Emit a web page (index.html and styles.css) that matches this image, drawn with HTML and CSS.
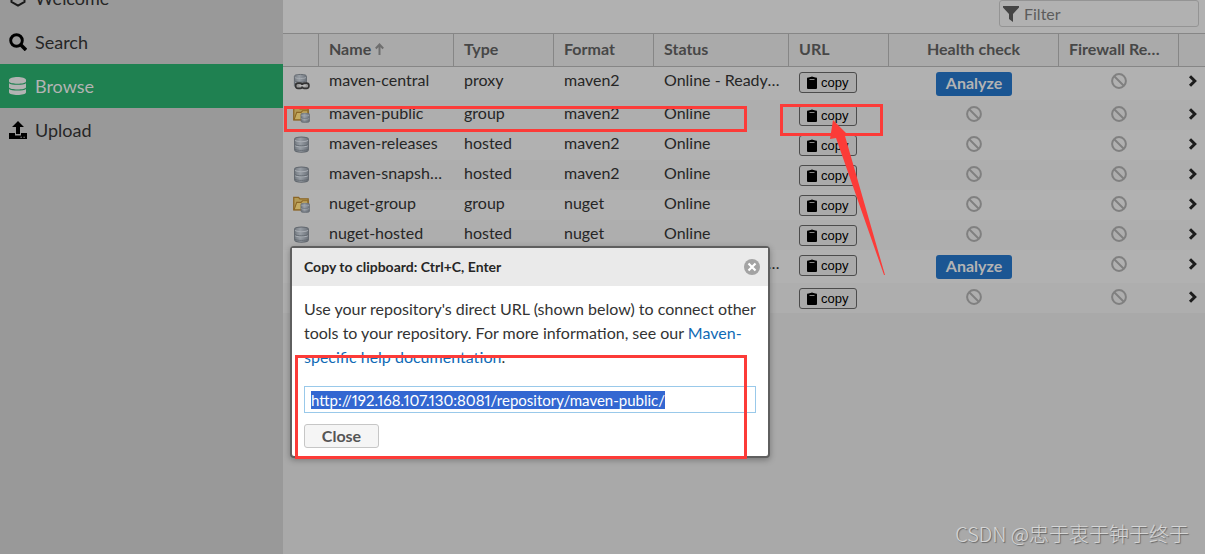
FILE: index.html
```html
<!DOCTYPE html>
<html lang="en">
<head>
<meta charset="utf-8">
<title>Browse repositories</title>
<link rel="stylesheet" href="styles.css">
</head>
<body>
<svg class="defs" aria-hidden="true">
  <defs>
    <linearGradient id="metal" x1="0" x2="1" y1="0" y2="0"><stop offset="0" stop-color="#747a81"/><stop offset=".4" stop-color="#989ea5"/><stop offset="1" stop-color="#6d737b"/></linearGradient>
    <symbol id="i-db" viewBox="0 0 16 16"><path d="M1.500 3.200C1.500 1.800 3 1 8 1s6.500.8 6.500 2.200v9.600c0 1.400-1.500 2.500-6.500 2.500s-6.500-1.100-6.500-2.500z" fill="url(#metal)" stroke="#62686f"/><path d="M2 4.200c1.500 1.500 10.500 1.500 12 0M2 9c1.500 1.500 10.500 1.500 12 0" fill="none" stroke="#a9aeb4" stroke-width="1"/><path d="M2 8.100c1.500 1.500 10.500 1.500 12 0M2 12.500c1.500 1.400 10.500 1.400 12 0" fill="none" stroke="#5f656d" stroke-width=".8"/></symbol>
    <symbol id="i-proxy" viewBox="0 0 16 16"><use href="#i-db" x="0" y="0" width="14" height="15"/><rect x="2.500" y="9.500" width="6.500" height="5" rx="2.200" fill="#999" stroke="#333" stroke-width="1.500"/><rect x="8.500" y="9.500" width="6.500" height="5" rx="2.200" fill="#999" stroke="#333" stroke-width="1.500"/><path d="M6 12h6" stroke="#bbb" stroke-width="1.300"/></symbol>
    <symbol id="i-group" viewBox="0 0 16 16"><path d="M.7 13V1.200h4.500l1.300 1.500h7.800V13z" fill="#b39a55" stroke="#8b6525" stroke-width="1.200"/><path d="M1 13 3.500 6h4l1.500-1.500h5V13z" fill="#c4ab62" stroke="#8b6525"/><use href="#i-db" x="6.500" y="6" width="10" height="10"/></symbol>
    <symbol id="i-ban" viewBox="0 0 16 16"><g fill="none" stroke="#808080" stroke-width="2"><circle cx="8" cy="8" r="6.900"/><path d="m3 3 10 10"/></g></symbol>
    <symbol id="i-clip" viewBox="0 0 10 13"><path d="M1 1.500h1.500V1h1.200C4 .2 6 .2 6.300 1h1.200v.5H9q1 0 1 1V12q0 1-1 1H1q-1 0-1-1V2.500q0-1 1-1z"/><path d="M2.500 3.500h5" stroke="#aaa" stroke-width=".8"/></symbol>
    <symbol id="i-chev" viewBox="0 0 8 10"><path d="m1.500 1 4 4-4 4" fill="none" stroke="#1d1d1d" stroke-width="2.500"/></symbol>
  </defs>
</svg>
<div class="app">
  <nav class="sidebar">
    <ul class="menu">
      <li><a href="#" class="menu-link"><svg viewBox="0 0 18 18"><path d="m9 1.500 6.500 3.700v7.600L9 16.500l-6.500-3.700V5.200z" fill="none" stroke="#1a1a1a" stroke-width="2"/></svg>Welcome</a></li>
      <li><a href="#" class="menu-link"><svg viewBox="0 0 18 18"><circle cx="7.500" cy="7.500" r="5.800" fill="none" stroke="#000" stroke-width="2.900"/><path d="m12 12 5 5" stroke="#000" stroke-width="3.500"/></svg>Search</a></li>
      <li><a href="#" class="menu-link active"><svg viewBox="0 0 18 18" fill="#b3b3b3"><path d="M0 3c0-4 17-4 17 0v1.500c0 3-17 3-17 0zM0 6.300c2 2 15 2 17 0v4c0 3-17 3-17 0zM0 12c2 2 15 2 17 0v3.300c0 3.600-17 3.600-17 0z"/></svg>Browse</a></li>
      <li><a href="#" class="menu-link"><svg viewBox="0 0 18 18"><path d="m9 0 6 6h-4v7H7V6H3z"/><path fill-rule="evenodd" d="M0 12h6v2.500h6V12h6v6H0zm11.500 3.800v1h1.300v-1zm3 0v1h1.300v-1z"/></svg>Upload</a></li>
    </ul>
  </nav>
  <main class="content">
    <div class="toolbar">
      <label class="filter"><svg viewBox="0 0 16 16"><path d="M0 0h16v1.500L10 8v8l-4-3V8L0 1.500z" fill="#444"/></svg><input type="text" placeholder="Filter" aria-label="Filter"></label>
    </div>
    <table class="repos">
      <colgroup><col class="c-icon"><col class="c-wide"><col class="c-std"><col class="c-std"><col class="c-wide"><col class="c-std"><col class="c-health"><col class="c-fire"><col></colgroup>
      <thead><tr><th></th><th>Name <svg class="sort" viewBox="0 0 9 12"><path d="M4.500 12V2M.8 5.500l3.700-4 3.700 4" fill="none" stroke="#6e6e6e" stroke-width="2"/></svg></th><th>Type</th><th>Format</th><th>Status</th><th>URL</th><th class="center">Health check</th><th>Firewall Report</th><th></th></tr></thead>
      <tbody>
        <tr><td><svg class="type"><use href="#i-proxy"/></svg></td><td>maven-central</td><td>proxy</td><td>maven2</td><td>Online - Ready to Connect</td><td class="act"><button class="copy"><svg><use href="#i-clip"/></svg>copy</button></td><td class="act center"><button class="analyze">Analyze</button></td><td class="center"><svg class="ban"><use href="#i-ban"/></svg></td><td class="go"><svg><use href="#i-chev"/></svg></td></tr>
        <tr><td><svg class="type"><use href="#i-group"/></svg></td><td>maven-public</td><td>group</td><td>maven2</td><td>Online</td><td class="act"><button class="copy"><svg><use href="#i-clip"/></svg>copy</button></td><td class="center"><svg class="ban"><use href="#i-ban"/></svg></td><td class="center"><svg class="ban"><use href="#i-ban"/></svg></td><td class="go"><svg><use href="#i-chev"/></svg></td></tr>
        <tr><td><svg class="type"><use href="#i-db"/></svg></td><td>maven-releases</td><td>hosted</td><td>maven2</td><td>Online</td><td class="act"><button class="copy"><svg><use href="#i-clip"/></svg>copy</button></td><td class="center"><svg class="ban"><use href="#i-ban"/></svg></td><td class="center"><svg class="ban"><use href="#i-ban"/></svg></td><td class="go"><svg><use href="#i-chev"/></svg></td></tr>
        <tr><td><svg class="type"><use href="#i-db"/></svg></td><td>maven-snapshots</td><td>hosted</td><td>maven2</td><td>Online</td><td class="act"><button class="copy"><svg><use href="#i-clip"/></svg>copy</button></td><td class="center"><svg class="ban"><use href="#i-ban"/></svg></td><td class="center"><svg class="ban"><use href="#i-ban"/></svg></td><td class="go"><svg><use href="#i-chev"/></svg></td></tr>
        <tr><td><svg class="type"><use href="#i-group"/></svg></td><td>nuget-group</td><td>group</td><td>nuget</td><td>Online</td><td class="act"><button class="copy"><svg><use href="#i-clip"/></svg>copy</button></td><td class="center"><svg class="ban"><use href="#i-ban"/></svg></td><td class="center"><svg class="ban"><use href="#i-ban"/></svg></td><td class="go"><svg><use href="#i-chev"/></svg></td></tr>
        <tr><td><svg class="type"><use href="#i-db"/></svg></td><td>nuget-hosted</td><td>hosted</td><td>nuget</td><td>Online</td><td class="act"><button class="copy"><svg><use href="#i-clip"/></svg>copy</button></td><td class="center"><svg class="ban"><use href="#i-ban"/></svg></td><td class="center"><svg class="ban"><use href="#i-ban"/></svg></td><td class="go"><svg><use href="#i-chev"/></svg></td></tr>
        <tr><td></td><td></td><td></td><td></td><td>Online - Ready to Connect</td><td class="act"><button class="copy"><svg><use href="#i-clip"/></svg>copy</button></td><td class="act center"><button class="analyze">Analyze</button></td><td class="center"><svg class="ban"><use href="#i-ban"/></svg></td><td class="go"><svg><use href="#i-chev"/></svg></td></tr>
        <tr><td></td><td></td><td></td><td></td><td></td><td class="act"><button class="copy"><svg><use href="#i-clip"/></svg>copy</button></td><td class="center"><svg class="ban"><use href="#i-ban"/></svg></td><td class="center"><svg class="ban"><use href="#i-ban"/></svg></td><td class="go"><svg><use href="#i-chev"/></svg></td></tr>
      </tbody>
    </table>
  </main>
</div>
<section class="dialog" role="dialog" aria-labelledby="dialog-title">
  <header class="dialog-head"><h2 id="dialog-title">Copy to clipboard: Ctrl+C, Enter</h2><button class="dismiss" aria-label="Dismiss"><svg viewBox="0 0 16 16"><circle cx="8" cy="8" r="8" fill="#a3a3a3"/><path d="m4.500 4.500 7 7m0-7-7 7" stroke="#fff" stroke-width="2.200"/></svg></button></header>
  <div class="dialog-body">
    <p>Use your repository's direct URL (shown below) to connect other tools to your repository. For more information, see our <a href="#">Maven-specific help documentation</a>.</p>
    <input id="url" class="url" type="text" aria-label="Repository URL" value="http://192.168.107.130:8081/repository/maven-public/">
    <button class="close">Close</button>
  </div>
</section>
<svg class="marks" width="1205" height="554" aria-hidden="true">
  <g fill="none" stroke="#fc3b38" stroke-width="3"><path d="M285.500 107.500h460v23h-460zM781.500 105.500h100v29h-100zM296.500 356.500h449v101h-449z"/></g>
  <path d="m833 120 14 14-2 2 40 139-1 0-48-137-6 1z" fill="#fc3b38"/>
</svg>
<div class="watermark">CSDN @忠于衷于钟于终于</div>
<script src="script.js"></script>
</body>
</html>
```
FILE: styles.css
```css
* { box-sizing: border-box; }
body { margin: 0; background: #a9a9a9; color: #262626; font: 16px/20px Lato, sans-serif; overflow: hidden; }
button, input { font-family: inherit; }
.defs { position: absolute; width: 0; height: 0; }
.app { display: flex; min-height: 100vh; }
.sidebar { width: 283px; flex: none; background: #999; overflow: hidden; }
.menu { list-style: none; margin: -24px 0 0; padding: 0; }
.menu-link { display: flex; align-items: center; gap: 8px; height: 44px; padding-left: 9px; color: #262626; font-size: 18px; text-decoration: none; }
.menu-link svg { width: 18px; height: 18px; }
.menu-link.active { background: #1f8151; color: #b3b3b3; }
.content { flex: 1; min-width: 0; }
.toolbar { display: flex; justify-content: flex-end; height: 33px; padding-right: 6px; background: #b1b1b1; }
.filter { display: flex; align-items: center; gap: 5px; width: 200px; height: 27px; padding-left: 3px; border: 1px solid #949494; border-radius: 3px; }
.filter svg { width: 16px; height: 16px; flex: none; }
.filter input { width: 100%; border: 0; padding: 0; background: none; font-size: 16px; outline: none; }
.filter input::placeholder { color: #5c5c5c; }
.repos { width: 100%; table-layout: fixed; border-collapse: separate; border-spacing: 0; }
.c-icon { width: 36px; }
.c-wide { width: 135px; }
.c-std { width: 100px; }
.c-health { width: 170px; }
.c-fire { width: 120px; }
th, td { padding: 3px 8px 3px 10px; overflow: hidden; text-align: left; text-overflow: ellipsis; white-space: nowrap; vertical-align: top; }
th { height: 34px; padding: 5px 10px; background: #aaa; color: #474747; border: solid #868686; border-width: 1px 1px 1px 0; }
th:last-child { border-right: 0; }
td { background: #b1b1b1; }
tr:nth-child(even) td { background: #aeaeae; }
.center { padding-right: 10px; text-align: center; }
.act { padding: 5px 10px 4px; }
.sort { width: 9px; height: 12px; }
.type { display: block; width: 17px; height: 17px; margin-top: 3px; }
.ban { display: block; width: 16px; height: 16px; margin: 3px auto 0; }
.go { padding: 8px 9px 0; }
.go svg { display: block; width: 10px; height: 12px; }
.copy { display: flex; align-items: center; gap: 4px; width: 58px; height: 21px; padding: 0 7px; border: 1px solid #4c4c4c; border-radius: 3px; background: #aaa; color: #000; font: 13px/15px "Liberation Sans", sans-serif; }
.copy svg { width: 10px; height: 13px; }
.analyze { display: block; width: 76px; height: 24px; margin: 0 auto; padding: 0 0 3px; border: 0; border-radius: 3px; background: #1b5693; color: #b3b3b3; font-size: 16px; font-weight: 700; }
.dialog { position: absolute; left: 290px; top: 246px; width: 480px; background: #fff; border: 2px solid #5f5f5f; border-radius: 4px; box-shadow: 0 2px 6px rgba(0, 0, 0, .3); }
.dialog-head { display: flex; align-items: center; justify-content: space-between; height: 38px; padding: 0 8px 0 12px; background: #eaeaea; }
.dialog-head h2 { margin: 0; font-size: 14px; }
.dismiss { padding: 0; border: 0; background: none; }
.dismiss svg { display: block; width: 16px; height: 16px; }
.dialog-body { padding: 11px 12px 8px; color: #333; }
.dialog-body p { margin: 0 0 17px; line-height: 24px; }
.dialog-body a { color: #0f6ab5; text-decoration: none; }
.url { display: block; width: 100%; height: 27px; padding: 0 6px; border: 1px solid #99c9ea; color: #262626; font-size: 15px; line-height: 20px; font-variant-numeric: proportional-nums; outline: none; }
.url::selection { background: #3367d1; color: #fff; }
.close { width: 75px; height: 24px; margin-top: 11px; padding: 0 0 2px; display: block; border: 1px solid #c6c6c6; border-radius: 3px; background: #f5f5f5; color: #555; font-size: 16px; font-weight: 700; }
.marks { position: absolute; left: 0; top: 0; pointer-events: none; }
.watermark { position: absolute; right: 16px; bottom: 6px; color: #d6d6d6; font: 300 20px/28px "Noto Sans CJK SC", sans-serif; text-shadow: 1px 1px 1px #666; }
```
FILE: script.js
```js
const url = document.getElementById("url");
url.focus();
url.select();
```
